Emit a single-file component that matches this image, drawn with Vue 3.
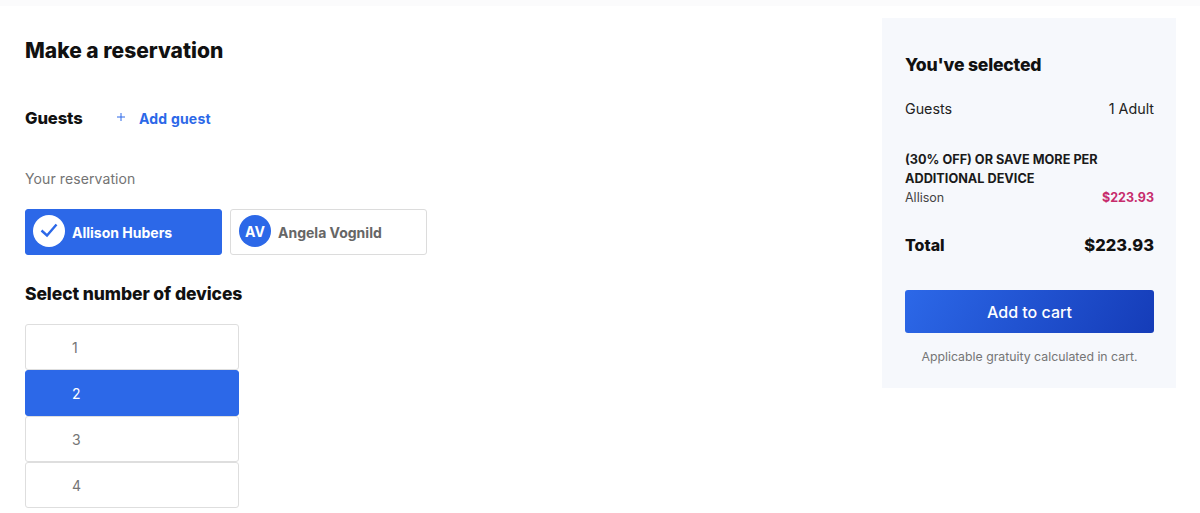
<template>
  <div class="page">
    <div class="top-strip"></div>
    <div class="columns">
      <main class="booking">
        <h1 class="page-title">Make a reservation</h1>

        <div class="guests-row">
          <h2 class="guests-title">Guests</h2>
          <a class="add-guest" href="#">
            <span class="plus-circle">
              <svg width="8" height="8" viewBox="0 0 8 8" fill="none">
                <path d="M4 0V8M0 4H8" stroke="#2c68e8" stroke-width="1" />
              </svg>
            </span>
            Add guest
          </a>
        </div>

        <p class="reservation-label">Your reservation</p>

        <div class="guest-cards">
          <div
            v-for="guest in guests"
            :key="guest.name"
            class="guest-card"
            :class="{ selected: guest.selected }"
          >
            <span class="avatar">
              <svg v-if="guest.selected" width="18" height="15" viewBox="0 0 18 15" fill="none">
                <path d="M1.5 7.5L7 12.5L16.5 1.5" stroke="#2c68e8" stroke-width="2.4" />
              </svg>
              <template v-else>{{ guest.initials }}</template>
            </span>
            <span class="guest-name">{{ guest.name }}</span>
          </div>
        </div>

        <h2 class="devices-title">Select number of devices</h2>

        <ul class="device-list">
          <li
            v-for="n in devices"
            :key="n"
            class="device-item"
            :class="{ active: n === selectedDevices }"
          >
            {{ n }}
          </li>
        </ul>
      </main>

      <aside class="summary">
        <h2 class="summary-title">You've selected</h2>
        <div class="summary-row guests-line">
          <span>Guests</span>
          <span>1 Adult</span>
        </div>
        <p class="offer">(30% OFF) OR SAVE MORE PER ADDITIONAL DEVICE</p>
        <div class="summary-row price-line">
          <span>Allison</span>
          <span class="price">$223.93</span>
        </div>
        <div class="summary-row total-line">
          <span>Total</span>
          <span class="total-amount">$223.93</span>
        </div>
        <button class="cart-button">Add to cart</button>
        <p class="gratuity">Applicable gratuity calculated in cart.</p>
      </aside>
    </div>
  </div>
</template>

<script setup>
const guests = [
  { name: 'Allison Hubers', initials: 'AH', selected: true },
  { name: 'Angela Vognild', initials: 'AV', selected: false }
]

const devices = [1, 2, 3, 4]
const selectedDevices = 2
</script>

<style>
html,
body {
  margin: 0;
  background: #fff;
  overflow: hidden;
}
</style>

<style scoped>
.page {
  height: 513px;
  overflow: hidden;
  background: #fff;
  font-family: Inter, "Open Sans", sans-serif;
  color: #111;
}

.top-strip {
  height: 6px;
  background: #fbfbfc;
}

.columns {
  display: flex;
  justify-content: space-between;
  padding: 12px 24px 0 25px;
}

/* Left column */
.booking {
  width: 420px;
}

.page-title {
  margin: 17px 0 0;
  font-size: 21px;
  line-height: 32px;
  font-weight: 800;
  color: #111;
}

.guests-row {
  display: flex;
  align-items: center;
  margin-top: 37px;
  height: 28px;
}

.guests-title {
  margin: 0;
  width: 84px;
  font-size: 16.6px;
  font-weight: 800;
  letter-spacing: -0.1px;
}

.add-guest {
  display: flex;
  align-items: center;
  color: #2c68e8;
  font-size: 14px;
  font-weight: 700;
  letter-spacing: 0.2px;
  text-decoration: none;
}

.plus-circle {
  display: flex;
  align-items: center;
  justify-content: center;
  width: 30px;
  height: 28px;
  padding: 0 6px 2px 0;
  box-sizing: border-box;
}

.reservation-label {
  margin: 36px 0 0;
  font-size: 14px;
  line-height: 22px;
  letter-spacing: 0.1px;
  color: #737373;
}

.guest-cards {
  display: flex;
  gap: 8px;
  margin-top: 19px;
}

.guest-card {
  display: flex;
  align-items: center;
  box-sizing: border-box;
  width: 197px;
  height: 46px;
  padding-left: 8px;
  border: 1px solid #dcdcdc;
  border-radius: 3px;
  background: #fff;
  color: #666;
  font-size: 14px;
  font-weight: 700;
}

.guest-card.selected {
  padding-left: 7px;
  border-color: #2c68e8;
  background: #2c68e8;
  color: #fff;
}

.avatar {
  display: flex;
  align-items: center;
  justify-content: center;
  flex: none;
  width: 32px;
  height: 32px;
  margin: 0 7px 2px 0;
  border-radius: 50%;
  background: #2c68e8;
  color: #fff;
  font-size: 14px;
  font-weight: 700;
}

.selected .avatar {
  margin-bottom: 3px;
  background: #fff;
}

.devices-title {
  margin: 25px 0 0;
  font-size: 17.5px;
  line-height: 28px;
  font-weight: 800;
  letter-spacing: -0.1px;
}

.device-list {
  list-style: none;
  margin: 16px 0 0;
  padding: 0;
  width: 214px;
}

.device-item {
  box-sizing: border-box;
  height: 46px;
  line-height: 45px;
  padding-left: 46px;
  border: 1px solid #dedede;
  border-radius: 3px;
  font-size: 14px;
  color: #757575;
}

.device-item.active {
  border-color: #2c68e8;
  background: #2c68e8;
  color: #fff;
}

/* Summary */
.summary {
  box-sizing: border-box;
  width: 294px;
  height: 370px;
  padding: 33px 22px 0 23px;
  background: #f6f8fc;
}

.summary-title {
  margin: 0;
  font-size: 17.6px;
  line-height: 28px;
  font-weight: 800;
  letter-spacing: -0.2px;
}

.summary-row {
  display: flex;
  justify-content: space-between;
  align-items: center;
}

.guests-line {
  margin-top: 19px;
  font-size: 14.3px;
  line-height: 22px;
  color: #222;
}

.offer {
  margin: 30px 0 0;
  font-size: 12.7px;
  line-height: 19px;
  font-weight: 700;
  color: #1a1a1a;
}

.price-line {
  font-size: 12.5px;
  line-height: 19px;
  color: #444;
}

.price {
  font-weight: 700;
  color: #c72c6c;
}

.total-line {
  margin-top: 26px;
  font-size: 16px;
  line-height: 24px;
  font-weight: 800;
}

.total-amount {
  font-size: 16.5px;
}

.cart-button {
  display: block;
  width: 100%;
  height: 43px;
  margin-top: 33px;
  border: none;
  border-radius: 3px;
  background: linear-gradient(120deg, #2c68e8 0%, #153cb8 100%);
  color: #fff;
  font-family: inherit;
  font-size: 16px;
  font-weight: 500;
}

.gratuity {
  margin: 15px 0 0;
  text-align: center;
  font-size: 12.3px;
  line-height: 18px;
  color: #757575;
}
</style>
